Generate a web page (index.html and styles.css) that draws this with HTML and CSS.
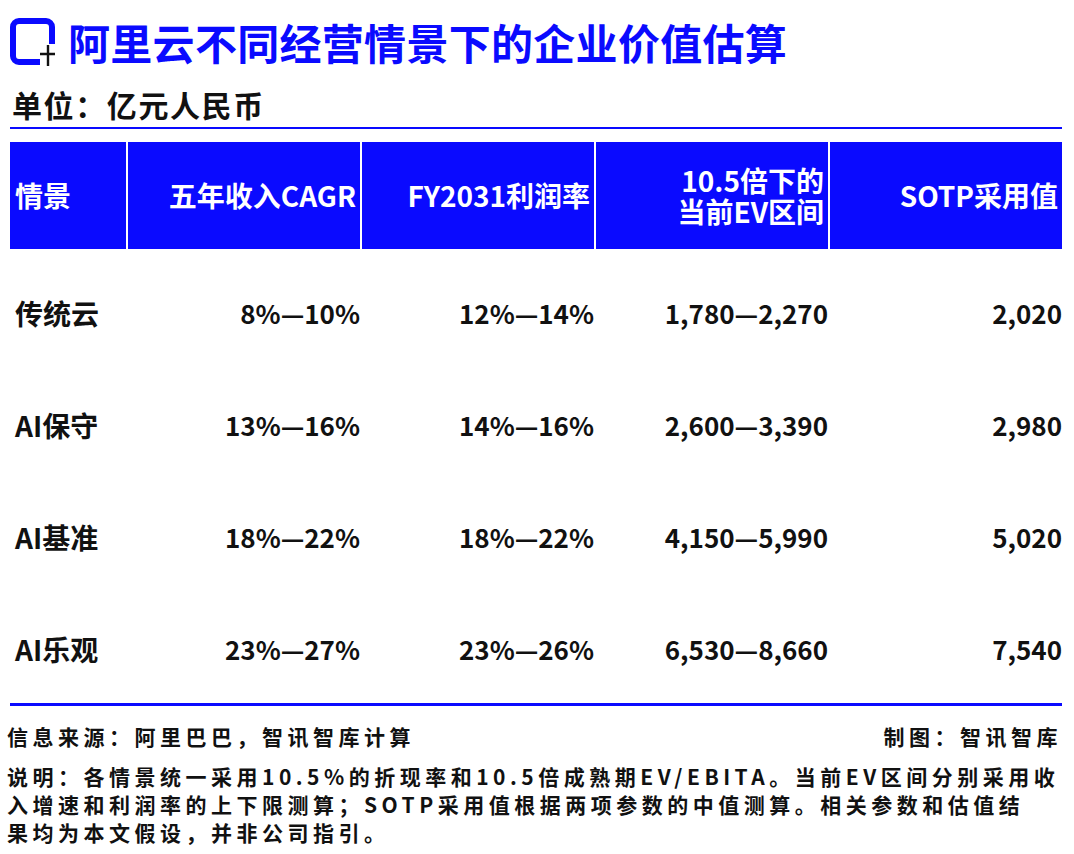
FILE: index.html
```html
<!DOCTYPE html>
<html lang="zh-CN">
<head>
<meta charset="utf-8">
<title>阿里云不同经营情景下的企业价值估算</title>
<link rel="stylesheet" href="styles.css">
</head>
<body>
<div class="page">
  <div class="title-row">
    <svg class="logo" width="46" height="48" viewBox="0 0 46 48">
      <path d="M30 44 H9 A6 6 0 0 1 3 38 V9 A6 6 0 0 1 9 3 H36 A6 6 0 0 1 42 9 V26" fill="none" stroke="#0a0aff" stroke-width="6"/>
      <path d="M30 36 H45 M38 27 V48" fill="none" stroke="#111" stroke-width="2.4"/>
    </svg>
    <h1 class="title">阿里云不同经营情景下的企业价值估算</h1>
  </div>
  <div class="unit">单位：亿元人民币</div>
  <div class="rule-top"></div>

  <div class="grid head">
    <div class="hcell first">情景</div>
    <div class="hcell">五年收入CAGR</div>
    <div class="hcell">FY2031利润率</div>
    <div class="hcell">10.5倍下的<br>当前EV区间</div>
    <div class="hcell">SOTP采用值</div>
  </div>

  <div class="grid row">
    <div class="cell first">传统云</div>
    <div class="cell">8%—10%</div>
    <div class="cell">12%—14%</div>
    <div class="cell">1,780—2,270</div>
    <div class="cell">2,020</div>
  </div>
  <div class="grid row">
    <div class="cell first">AI保守</div>
    <div class="cell">13%—16%</div>
    <div class="cell">14%—16%</div>
    <div class="cell">2,600—3,390</div>
    <div class="cell">2,980</div>
  </div>
  <div class="grid row">
    <div class="cell first">AI基准</div>
    <div class="cell">18%—22%</div>
    <div class="cell">18%—22%</div>
    <div class="cell">4,150—5,990</div>
    <div class="cell">5,020</div>
  </div>
  <div class="grid row">
    <div class="cell first">AI乐观</div>
    <div class="cell">23%—27%</div>
    <div class="cell">23%—26%</div>
    <div class="cell">6,530—8,660</div>
    <div class="cell">7,540</div>
  </div>

  <div class="rule-bottom"></div>
  <div class="source-row">
    <span>信息来源：阿里巴巴，智讯智库计算</span>
    <span>制图：智讯智库</span>
  </div>
  <p class="note">说明：各情景统一采用10.5%的折现率和10.5倍成熟期EV/EBITA。当前EV区间分别采用收<br>入增速和利润率的上下限测算；SOTP采用值根据两项参数的中值测算。相关参数和估值结<br>果均为本文假设，并非公司指引。</p>
</div>
</body>
</html>
```

FILE: styles.css
```css
* { box-sizing: border-box; }
html, body { margin: 0; padding: 0; background: #fff; }
body {
  font-family: "Noto Sans CJK SC", "Noto Sans", sans-serif;
  color: #111;
  width: 1074px;
  height: 854px;
  overflow: hidden;
}
.page { padding: 18px 12px 0 10px; }

.title-row { display: flex; align-items: center; height: 48px; }
.logo { display: block; flex: none; margin-right: 12px; }
.title {
  margin: 0;
  font-size: 42px;
  line-height: 48px;
  font-weight: 700;
  color: #0a0aff;
  white-space: nowrap;
  letter-spacing: 0.3px;
}
.unit {
  margin-top: 20px;
  padding-left: 2px;
  font-size: 30px;
  line-height: 36px;
  font-weight: 700;
  letter-spacing: 1.6px;
  color: #111;
}
.rule-top { margin-top: 5px; height: 2px; background: #0a0aff; }

.grid {
  display: grid;
  grid-template-columns: 116px repeat(4, 1fr);
  column-gap: 2px;
}
.head { margin-top: 13px; height: 107px; }
.hcell {
  background: #0a0aff;
  color: #fff;
  font-size: 28px;
  font-weight: 700;
  line-height: 31px;
  display: flex;
  align-items: center;
  justify-content: flex-end;
  text-align: right;
  padding: 0 4px;
  white-space: nowrap;
}
.hcell.first { justify-content: flex-start; text-align: left; padding-left: 5px; }

.row { height: 112px; padding-top: 46px; }
.cell {
  font-size: 26px;
  font-weight: 700;
  line-height: 36px;
  text-align: right;
  padding-right: 0;
  white-space: nowrap;
  color: #111;
}
.cell.first { text-align: left; padding-left: 5px; font-size: 28px; }

.rule-bottom { margin-top: 6px; height: 3px; background: #0a0aff; }
.source-row {
  display: flex;
  justify-content: space-between;
  margin: 16px 0 0 -3px;
  font-size: 21px;
  line-height: 28px;
  font-weight: 700;
  letter-spacing: 4.5px;
}
.note {
  margin: 12px 0 0 -3px;
  font-size: 21px;
  line-height: 28px;
  font-weight: 700;
  letter-spacing: 4.5px;
  white-space: nowrap;
  color: #111;
}
```
